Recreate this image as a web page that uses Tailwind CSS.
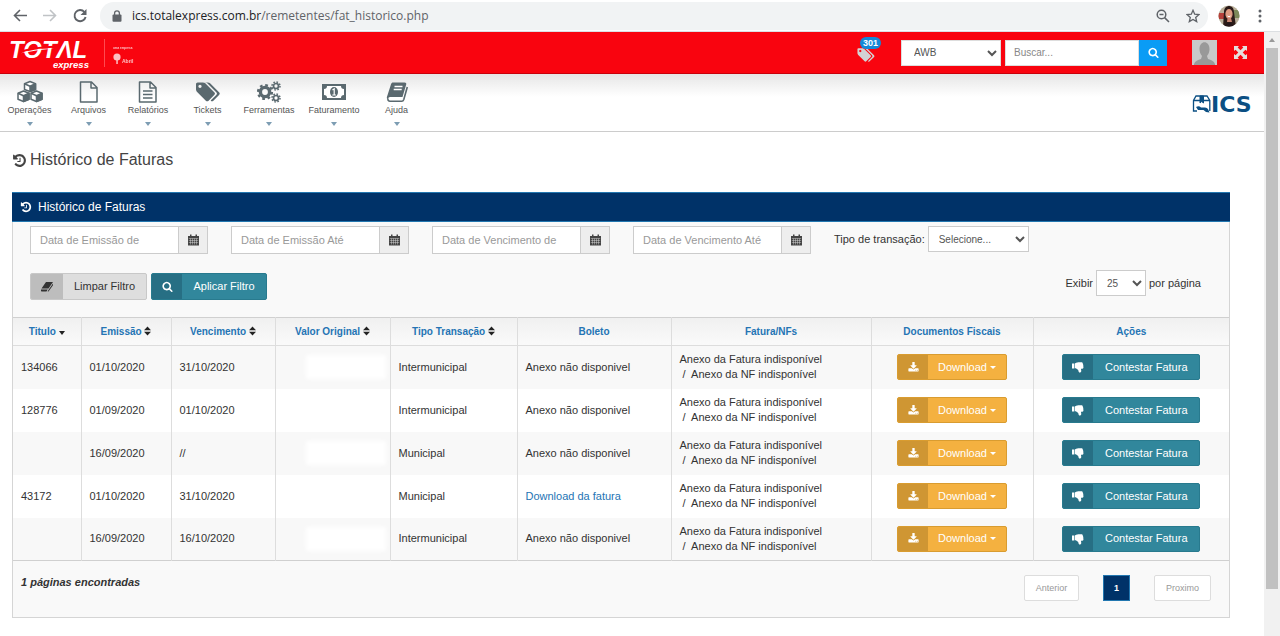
<!DOCTYPE html>
<html lang="pt-BR">
<head>
<meta charset="utf-8">
<meta name="viewport" content="width=device-width, initial-scale=1">
<title>Histórico de Faturas</title>
<script src="https://cdn.jsdelivr.net/npm/@tailwindcss/browser@4"></script>
</head>
<body class="flex min-h-screen flex-col bg-white font-['Liberation_Sans',Arial,sans-serif] text-[11px] leading-[15px] text-[#333]">

<svg class="hidden" aria-hidden="true">
  <symbol id="i-search" viewBox="0 0 1792 1792"><path d="M1216 832q0-185-131.500-316.500t-316.500-131.500-316.500 131.500-131.500 316.500 131.500 316.500 316.500 131.500 316.500-131.500 131.500-316.500zm512 832q0 52-38 90t-90 38q-54 0-90-38l-343-342q-179 124-399 124-143 0-273.500-55.500t-225-150-150-225-55.500-273.500 55.500-273.500 150-225 225-150 273.500-55.500 273.500 55.500 225 150 150 225 55.500 273.500q0 220-124 399l343 343q37 37 37 90z"/></symbol>
  <symbol id="i-history" viewBox="0 0 1792 1792"><path d="M1664 896q0 156-61 298t-164 245-245 164-298 61q-172 0-327-72.500t-264-204.500q-7-10-6.500-22.500t8.500-20.500l137-138q10-9 25-9 16 2 23 12 73 95 179 147t225 52q104 0 198.500-40.500t163.500-109.500 109.500-163.500 40.500-198.500-40.500-198.500-109.500-163.500-163.500-109.500-198.500-40.500q-98 0-188 35.500t-160 101.500l137 138q31 30 14 69-17 40-59 40h-448q-26 0-45-19t-19-45v-448q0-42 40-59 39-17 69 14l130 129q107-101 244.500-156.500t284.500-55.500q156 0 298 61t245 164 164 245 61 298zm-640-288v448q0 14-9 23t-23 9h-320q-14 0-23-9t-9-23v-64q0-14 9-23t23-9h224v-352q0-14 9-23t23-9h64q14 0 23 9t9 23z"/></symbol>
  <symbol id="i-download" viewBox="0 0 1792 1792"><path d="M1344 1344q0-26-19-45t-45-19-45 19-19 45 19 45 45 19 45-19 19-45zm256 0q0-26-19-45t-45-19-45 19-19 45 19 45 45 19 45-19 19-45zm128-224v320q0 40-28 68t-68 28h-1472q-40 0-68-28t-28-68v-320q0-40 28-68t68-28h465l135 136q58 56 136 56t136-56l136-136h464q40 0 68 28t28 68zm-325-569q17 41-14 70l-448 448q-18 19-45 19t-45-19l-448-448q-31-29-14-70 17-39 59-39h256v-448q0-26 19-45t45-19h256q26 0 45 19t19 45v448h256q42 0 59 39z"/></symbol>
  <symbol id="i-tags" viewBox="0 0 1920 1792"><path d="M448 448q0-53-37.500-90.500t-90.500-37.500-90.500 37.500-37.500 90.500 37.500 90.500 90.500 37.500 90.500-37.500 37.500-90.500zm1067 576q0 53-37 90l-491 492q-39 37-91 37-53 0-90-37l-715-716q-38-37-64.500-101t-26.500-117v-416q0-52 38-90t90-38h416q53 0 117 26.500t102 64.500l715 714q37 39 37 91zm384 0q0 53-37 90l-491 492q-39 37-91 37-36 0-59-14t-53-45l470-470q37-37 37-90 0-52-37-91l-715-714q-38-38-102-64.500t-117-26.500h224q53 0 117 26.500t102 64.500l715 714q37 39 37 91z"/></symbol>
  <symbol id="i-thumb" viewBox="0 0 12 12"><path d="M0 2.600h2.300v5H0zM2.900 2.400C4.600 1.500 6 1.300 7.500 1.300h1.900c1 0 1.400.6 1.300 1.300.5.400.6 1 .4 1.500.4.500.4 1 .2 1.500.4 1 .1 2.100-1 2.100H8.900c.3.900.5 1.900.3 2.700-.3 1.200-2 1.500-2.400.6-.3-.8-.3-1.700-.9-2.300-.8-.9-1.800-1.500-3-1.500z"/></symbol>
  <symbol id="i-calendar" viewBox="0 0 11 12"><path d="M0 2h2V.5h1.500V2h4V.5H9V2h2v9.500H0z"/><path d="M.8 4.500h9.400M.8 6.500h9.400M.8 8.500h9.400M2.500 4.500v6M4.500 4.500v6M6.500 4.500v6M8.500 4.500v6" stroke="#eee" stroke-width=".4" fill="none"/></symbol>
  <symbol id="i-sort" viewBox="0 0 7 10"><path d="M0 4.200 3.500.5 7 4.200zM0 5.800h7L3.500 9.500z"/></symbol>
</svg>

<!-- Browser bar -->
<header class="flex h-8 shrink-0 items-center border-b border-[#dcdfe2] bg-white text-[#5f6368]">
  <nav class="flex items-center gap-3.5 px-3" aria-label="Navegador">
    <button type="button" aria-label="Voltar"><svg class="size-4" viewBox="0 0 16 16" fill="none" stroke="currentColor" stroke-width="1.600"><path d="M15 7.500H2.500M8 2l-5.500 5.500L8 13"/></svg></button>
    <button type="button" aria-label="Avançar" class="text-[#c0c3c6]"><svg class="size-4" viewBox="0 0 16 16" fill="none" stroke="currentColor" stroke-width="1.600"><path d="M1 7.500h12.500M8 2l5.500 5.500L8 13"/></svg></button>
    <button type="button" aria-label="Recarregar"><svg class="size-4" viewBox="0 0 16 16"><path d="M12.400 4A5.600 5.600 0 1 0 13.600 9" fill="none" stroke="currentColor" stroke-width="1.900"/><path d="M14.500 1v6h-6z" fill="currentColor"/></svg></button>
  </nav>
  <div class="flex h-7 flex-1 items-center rounded-full bg-[#f1f3f4] pr-2 pl-3">
    <svg class="h-3 w-2.5 shrink-0" viewBox="0 0 10 12" aria-hidden="true"><rect x=".5" y="4.500" width="9" height="7.200" rx="1" fill="currentColor"/><path d="M2.600 5V3.200a2.400 2.400 0 0 1 4.800 0V5" fill="none" stroke="currentColor" stroke-width="1.300"/></svg>
    <p class="ml-2.5 flex-1 font-['Open_Sans',sans-serif] text-[12px] leading-5"><span class="text-[#202124]">ics.totalexpress.com.br</span>/remetentes/fat_historico.php</p>
    <button type="button" aria-label="Zoom" class="mr-4"><svg class="size-3.5" viewBox="0 0 14 14" fill="none" stroke="currentColor" stroke-width="1.500"><circle cx="5.500" cy="5.500" r="4.300"/><path d="M8.600 8.600 13 13M3.500 5.500h4"/></svg></button>
    <button type="button" aria-label="Favoritos"><svg class="size-3.5" viewBox="0 0 14 14" fill="none" stroke="currentColor" stroke-width="1.300"><path d="m7 1.300 1.700 3.900 4.200.4-3.200 2.800 1 4.200L7 10.400l-3.700 2.200 1-4.200L1.100 5.600l4.200-.4z"/></svg></button>
  </div>
  <button type="button" aria-label="Perfil" class="ml-2.5"><svg class="size-[22px]" viewBox="0 0 22 22"><clipPath id="pf"><circle cx="11" cy="11" r="10.500"/></clipPath><g clip-path="url(#pf)"><path fill="#b9b09a" d="M0 0h22v22H0z"/><path fill="#b5413a" d="M0 8h6v6H0z"/><path fill="#7c8a5a" d="M16 5h6v8h-6z"/><path fill="#2c1b18" d="M6 7c0-8 10-8 10 0l2 15H5z"/><ellipse cx="11" cy="9" rx="3.600" ry="5" fill="#dd9c82"/><path fill="#c98470" d="M9.500 13h3.500l1 4h-5z"/><path fill="#241619" d="M6 22q5-9 10 0z"/><path d="M9.500 11q1.500 1.400 3 0" stroke="#fff" fill="none"/></g></svg></button>
  <button type="button" aria-label="Menu" class="mr-[18px] ml-[18px]"><svg class="h-3.5 w-1" viewBox="0 0 4 14" fill="currentColor"><circle cx="2" cy="2" r="1.500"/><circle cx="2" cy="7" r="1.500"/><circle cx="2" cy="12" r="1.500"/></svg></button>
</header>

<div class="flex flex-1">
<div class="min-w-0 flex-1">

  <!-- Top bar -->
  <header class="flex h-[42px] items-center border-b border-[#c9000b] bg-[#f9040f]">
    <a href="#" class="ml-2.5"><svg class="h-[34px] w-[130px]" viewBox="0 0 130 34" role="img" aria-label="Total Express, uma empresa Abril" fill="#fff" font-family="Liberation Sans" font-weight="bold">
      <text x="-1" y="22" font-size="24" font-style="italic">TOTΛL</text>
      <path d="M12 15.200q14-4 32-4.500" stroke="#f9040f" stroke-width="2" fill="none"/>
      <path d="M11 17.300q12-5 33-4.800-16 1-33 4.800z"/>
      <text x="43" y="32" font-size="9.500" font-style="italic">express</text>
      <path d="M94.500 3v28" stroke="#ff4a50" stroke-width="1"/>
      <g opacity=".75"><text x="103" y="13" font-size="3">uma empresa</text><circle cx="107" cy="21" r="3.600"/><path d="M106.300 22h1.500v6h-1.500z"/><text x="112" y="27" font-size="5">Abril</text></g>
    </svg></a>
    <div class="ml-auto flex items-center">
      <a href="#" class="relative mr-[26px] block" aria-label="301 tickets">
        <svg class="mt-1 h-4 w-[18px] fill-[#d3d3d3]" aria-hidden="true"><use href="#i-tags"/></svg>
        <span class="absolute -top-1.5 left-[3px] rounded-full bg-[#1488d8] px-[3px] text-[9px] leading-3 font-bold text-white">301</span>
      </a>
      <select aria-label="Tipo de busca" class="h-[26px] w-[100px] border border-[#ddd] bg-white pl-2 text-[10px] text-[#555]"><option>AWB</option></select>
      <form class="ml-1 flex" onsubmit="return false">
        <input type="search" aria-label="Buscar" placeholder="Buscar..." class="h-[26px] w-[134px] border border-[#ddd] bg-white px-2 text-[10px] placeholder:text-[#888]">
        <button type="submit" aria-label="Buscar" class="flex h-[26px] w-7 items-center justify-center bg-[#0a9cf5] fill-white"><svg class="size-[11px]"><use href="#i-search"/></svg></button>
      </form>
      <a href="#" aria-label="Usuário" class="ml-[25px]"><svg class="size-[25px]" viewBox="0 0 25 25"><path fill="#c9c9c9" d="M0 0h25v25H0z"/><path fill="#999" d="M7.500 9c0-9 10-9 10 0 0 3-1 5-2.500 7l1 3c3 .8 6 2 7 5v1H2v-1c1-3 4-4.200 7-5l1-3c-1.500-2-2.500-4-2.500-7z"/></svg></a>
      <button type="button" aria-label="Tela cheia" class="mx-[17px]"><svg class="size-[13px]" viewBox="0 0 13 13" fill="#e6dede"><path d="M0 0h5L3.700 1.500 6.500 4.300 9.300 1.500 8 0h5v5l-1.500-1.300-2.800 2.800 2.800 2.800L13 8v5H8l1.300-1.500-2.800-2.800-2.800 2.800L5 13H0V8l1.500 1.300 2.800-2.800-2.800-2.800L0 5z"/></svg></button>
    </div>
  </header>

  <!-- Main menu -->
  <div class="flex h-[58px] items-center justify-between border-b border-[#ccc] bg-linear-to-b from-[#e6e6e6] to-white to-40%">
    <nav class="flex self-start pt-1.5 text-[9px] leading-3 text-[#555]" aria-label="Principal">
      <a href="#" class="flex w-[59px] flex-col items-center"><svg class="h-6 w-7" viewBox="0 0 28 24" stroke="#5a696f" stroke-linejoin="round" stroke-width="1.500"><g fill="#fff"><path d="m14 1.500 5.500 2.200v5.800L14 11.500 8.500 9.500V3.700z"/><path d="m7.500 11 5.500 2.200v6L7.500 21.500 2 19.200v-6z"/><path d="m20.500 11 5.500 2.200v6l-5.500 2.300-5.500-2.300v-6z"/></g><path fill="#5a696f" d="m14 6.200 5.500-2.500v5.800L14 11.500zM7.500 15.800l5.500-2.600v6l-5.500 2.300zM20.500 15.800l5.500-2.600v6l-5.500 2.300z"/><path fill="none" d="M8.500 3.700 14 6.200M2 13.200l5.500 2.600M15 13.200l5.500 2.600"/></svg><span>Operações</span><i class="mt-1.5 border-x-[3px] border-t-4 border-x-transparent border-t-[#7d9db3]"></i></a>
      <a href="#" class="flex w-[59px] flex-col items-center"><svg class="h-6 w-5" viewBox="0 0 20 24" fill="none" stroke="#5a696f" stroke-width="1.500" stroke-linejoin="round"><path d="M1.500 2h11l5.500 5.500V22H1.500zM12 2v6h6"/></svg><span>Arquivos</span><i class="mt-1.5 border-x-[3px] border-t-4 border-x-transparent border-t-[#7d9db3]"></i></a>
      <a href="#" class="flex w-[60px] flex-col items-center"><svg class="h-6 w-5" viewBox="0 0 20 24" fill="none" stroke="#5a696f" stroke-width="1.500" stroke-linejoin="round"><path d="M1.500 2h11l5.500 5.500V22H1.500zM12 2v6h6M5 11h9.500M5 14.500h9.500M5 18h9.500"/></svg><span>Relatórios</span><i class="mt-1.5 border-x-[3px] border-t-4 border-x-transparent border-t-[#7d9db3]"></i></a>
      <a href="#" class="flex w-[59px] flex-col items-center"><svg class="h-6 w-6 fill-[#5a696f]"><use href="#i-tags"/></svg><span>Tickets</span><i class="mt-1.5 border-x-[3px] border-t-4 border-x-transparent border-t-[#7d9db3]"></i></a>
      <a href="#" class="flex w-16 flex-col items-center"><svg class="h-6 w-6" viewBox="0 0 24 24" fill="none" stroke="#5a696f"><circle cx="8" cy="12" r="4.600" stroke-width="3.400"/><circle cx="8" cy="12" r="7" stroke-width="2.200" stroke-dasharray="2.750"/><circle cx="19" cy="6" r="2.500" stroke-width="1.700"/><circle cx="19" cy="6" r="4" stroke-width="1.500" stroke-dasharray="1.570"/><circle cx="19" cy="18" r="2.500" stroke-width="1.700"/><circle cx="19" cy="18" r="4" stroke-width="1.500" stroke-dasharray="1.570"/></svg><span>Ferramentas</span><i class="mt-1.5 border-x-[3px] border-t-4 border-x-transparent border-t-[#7d9db3]"></i></a>
      <a href="#" class="flex w-[66px] flex-col items-center"><svg class="h-6 w-6" viewBox="0 0 24 24"><path fill="#5a696f" d="M0 4h24v16H0z"/><path fill="#fff" d="M5 6h14a3 3 0 0 0 3 3v6a3 3 0 0 0-3 3H5a3 3 0 0 0-3-3V9a3 3 0 0 0 3-3z"/><ellipse cx="12" cy="12" rx="4" ry="5" fill="#5a696f"/><path d="m10.500 10 1.700-1.200V15M10.300 15h3.600" fill="none" stroke="#fff" stroke-width="1.200"/></svg><span>Faturamento</span><i class="mt-1.5 border-x-[3px] border-t-4 border-x-transparent border-t-[#7d9db3]"></i></a>
      <a href="#" class="flex w-[59px] flex-col items-center"><svg class="h-6 w-[22px]" viewBox="0 0 22 24"><path d="M7 2.500h11.500c1.500 0 2 .8 1.700 2L16.500 17H4.200C2.500 17 2 18 2.300 19.200L1 18.500c-.4-1 0-2 .4-3L5 4.300C5.400 3 6 2.500 7 2.500z" fill="#5a696f"/><path d="M8.500 6.500h8M7.700 9.500h8" stroke="#fff" stroke-width="1.300"/><path d="M2 18.500c-.3 1.500.5 2.700 2 2.700h11.800c1 0 1.600-.6 2-1.700L21.300 7" fill="none" stroke="#5a696f" stroke-width="1.600"/></svg><span>Ajuda</span><i class="mt-1.5 border-x-[3px] border-t-4 border-x-transparent border-t-[#7d9db3]"></i></a>
    </nav>
    <a href="#" class="mr-2.5"><svg class="h-[22px] w-[62px]" viewBox="0 0 62 22" role="img" aria-label="ICS" fill="none" stroke="#0b4f83"><path d="M5 19H1.500V8.500L4 4h11l2.800 4.500V19M1.500 8.500H8M11.500 8.500h6" stroke-width="1.300"/><path d="M8 4h3.500v7L9.700 9.500 8 11z" fill="#0b4f83"/><path d="M4 15q3-1.500 5 .5h4q2 0 3 1.500l1.500 3.500q-4 0-6-2.500H6z" fill="#0b4f83" stroke="none"/><text x="19" y="20" font-family="DejaVu Sans" font-weight="bold" font-size="22" fill="#0b4f83" stroke="none">ICS</text></svg></a>
  </div>

  <main class="pr-[34px] pl-3">
    <h1 class="mt-4 flex items-center gap-[3px] text-[16px] leading-6 text-[#444]"><svg class="size-[15px] fill-[#444]" aria-hidden="true"><use href="#i-history"/></svg>Histórico de Faturas</h1>

    <section class="mt-5 border border-t-0 border-[#d5d5d5] bg-[#f9f9f9]">
      <h2 class="-mx-px flex h-[30px] items-center gap-1.5 border-y border-[#2277b0] bg-[#003268] px-2 text-[12px] text-white"><svg class="size-3 fill-white" aria-hidden="true"><use href="#i-history"/></svg>Histórico de Faturas</h2>

      <form class="pr-7 pl-[17px]" onsubmit="return false">
        <div class="mt-1 flex items-start gap-[23px]">
          <div class="flex"><input type="text" aria-label="Data de Emissão de" placeholder="Data de Emissão de" class="h-7 w-[149px] border border-[#ccc] bg-white px-[9px] placeholder:text-[#999]"><button type="button" aria-label="Abrir calendário" class="flex h-7 w-[29px] items-center justify-center border border-l-0 border-[#ccc] bg-[#eee] fill-[#444]"><svg class="h-3 w-[11px]"><use href="#i-calendar"/></svg></button></div>
          <div class="flex"><input type="text" aria-label="Data de Emissão Até" placeholder="Data de Emissão Até" class="h-7 w-[149px] border border-[#ccc] bg-white px-[9px] placeholder:text-[#999]"><button type="button" aria-label="Abrir calendário" class="flex h-7 w-[29px] items-center justify-center border border-l-0 border-[#ccc] bg-[#eee] fill-[#444]"><svg class="h-3 w-[11px]"><use href="#i-calendar"/></svg></button></div>
          <div class="flex"><input type="text" aria-label="Data de Vencimento de" placeholder="Data de Vencimento de" class="h-7 w-[149px] border border-[#ccc] bg-white px-[9px] placeholder:text-[#999]"><button type="button" aria-label="Abrir calendário" class="flex h-7 w-[29px] items-center justify-center border border-l-0 border-[#ccc] bg-[#eee] fill-[#444]"><svg class="h-3 w-[11px]"><use href="#i-calendar"/></svg></button></div>
          <div class="flex"><input type="text" aria-label="Data de Vencimento Até" placeholder="Data de Vencimento Até" class="h-7 w-[149px] border border-[#ccc] bg-white px-[9px] placeholder:text-[#999]"><button type="button" aria-label="Abrir calendário" class="flex h-7 w-[29px] items-center justify-center border border-l-0 border-[#ccc] bg-[#eee] fill-[#444]"><svg class="h-3 w-[11px]"><use href="#i-calendar"/></svg></button></div>
          <div class="flex items-center gap-[3px]"><label for="tipo">Tipo de transação:</label><select id="tipo" class="h-[26px] w-[101px] border border-[#ccc] bg-white pl-1.5 text-[10px] text-[#555]"><option>Selecione...</option></select></div>
        </div>
        <div class="mt-4 flex items-start justify-between pb-[17px]">
          <div class="mt-[3px] flex gap-1">
            <button type="reset" class="flex h-[27px] w-[117px] overflow-hidden rounded-xs border border-[#c8c8c8] bg-[#dedede]"><span class="flex h-full w-8 items-center justify-center bg-[#bdbdbd]"><svg class="h-2.5 w-3" viewBox="0 0 12 10" fill="#333"><path d="M5 0h7L7.500 6.500h-7zM0 7.500h6.700L5.500 9.500H.6Q-.4 9 0 7.500zM7.800 7.500l4.200-6v1.800L7.500 9.500H6.600z"/></svg></span><span class="flex h-full flex-1 items-center justify-center">Limpar Filtro</span></button>
            <button type="submit" class="flex h-[27px] w-[116px] overflow-hidden rounded-xs border border-[#287a8e] bg-[#31879c] text-white"><span class="flex h-full w-[30px] items-center justify-center bg-[#276f84] fill-white"><svg class="size-[11px]"><use href="#i-search"/></svg></span><span class="flex h-full flex-1 items-center justify-center">Aplicar Filtro</span></button>
          </div>
          <div class="flex items-center gap-[3px]"><label for="exibir">Exibir</label><select id="exibir" class="h-[26px] w-[50px] border border-[#ccc] bg-white pl-1.5 text-[10px] text-[#555]"><option>25</option></select><span>por página</span></div>
        </div>
      </form>

      <table class="w-full table-fixed border-collapse border-y border-[#d0d0d0]">
        <colgroup><col class="w-[68px]"><col class="w-[90px]"><col class="w-[104px]"><col class="w-[115px]"><col class="w-[127px]"><col class="w-[154px]"><col class="w-[200px]"><col class="w-[162px]"><col class="w-[196px]"></colgroup>
        <thead>
          <tr class="h-7 divide-x divide-[#ddd] border-b border-[#ddd] bg-linear-to-b from-[#f0f0f0] to-[#fafafa] text-[10px] text-[#2474b4]">
            <th scope="col"><a href="#">Titulo</a><i class="ml-[3px] inline-block border-x-[3px] border-t-4 border-x-transparent border-t-[#222]"></i></th>
            <th scope="col"><a href="#">Emissão</a> <svg class="inline h-2.5 w-[7px] fill-[#222] align-[-1px]"><use href="#i-sort"/></svg></th>
            <th scope="col"><a href="#">Vencimento</a> <svg class="inline h-2.5 w-[7px] fill-[#222] align-[-1px]"><use href="#i-sort"/></svg></th>
            <th scope="col"><a href="#">Valor Original</a> <svg class="inline h-2.5 w-[7px] fill-[#222] align-[-1px]"><use href="#i-sort"/></svg></th>
            <th scope="col"><a href="#">Tipo Transação</a> <svg class="inline h-2.5 w-[7px] fill-[#222] align-[-1px]"><use href="#i-sort"/></svg></th>
            <th scope="col">Boleto</th>
            <th scope="col">Fatura/NFs</th>
            <th scope="col">Documentos Fiscais</th>
            <th scope="col">Ações</th>
          </tr>
        </thead>
        <tbody id="rows"></tbody>
      </table>

      <footer class="flex items-start justify-between pt-3.5 pr-[18px] pb-4 pl-2">
        <p class="font-bold italic">1 páginas encontradas</p>
        <nav class="flex gap-6 text-[9px]" aria-label="Paginação">
          <button type="button" class="h-[26px] w-[55px] rounded-xs border border-[#ddd] bg-white text-[#999]">Anterior</button>
          <button type="button" aria-current="page" class="h-[26px] w-[27px] border border-[#2277b0] bg-[#003268] font-bold text-white">1</button>
          <button type="button" class="h-[26px] w-[57px] rounded-xs border border-[#ddd] bg-white text-[#999]">Proximo</button>
        </nav>
      </footer>
    </section>
  </main>
</div>

<!-- Scroll track -->
<aside class="flex w-4 shrink-0 flex-col items-center bg-[#f1f1f1]" aria-hidden="true">
  <i class="mt-1.5 mb-1.5 border-x-[3px] border-b-4 border-x-transparent border-b-[#999]"></i>
  <div class="w-3 flex-1 bg-[#c1c1c1]"></div>
  <div class="h-[47px]"></div>
</aside>
</div>

<template id="row">
  <tr class="h-[43px] divide-x divide-[#ddd] odd:bg-[#f8f8f8] even:bg-white">
    <td class="px-2"></td><td class="px-2"></td><td class="px-2"></td>
    <td class="pl-[30px]"><div class="h-6 w-20 bg-white blur-[2px]"></div></td>
    <td class="px-2"></td><td class="px-2"></td>
    <td class="px-2">Anexo da Fatura indisponível<br>&nbsp;/&nbsp; Anexo da NF indisponível</td>
    <td><button type="button" class="mx-auto flex h-[26px] w-[110px] overflow-hidden rounded-xs border border-[#d99c30] bg-[#f4b140] text-white"><span class="flex h-full w-[30px] items-center justify-center bg-[#cf9633] fill-white"><svg class="size-[11px]"><use href="#i-download"/></svg></span><span class="flex h-full flex-1 items-center justify-center gap-[3px]">Download<i class="border-x-[3px] border-t-[3px] border-x-transparent border-t-white"></i></span></button></td>
    <td><button type="button" class="mx-auto flex h-[26px] w-[138px] overflow-hidden rounded-xs border border-[#287a8e] bg-[#31879c] text-white"><span class="flex h-full w-[30px] items-center justify-center bg-[#276f84] fill-white"><svg class="size-3"><use href="#i-thumb"/></svg></span><span class="flex h-full flex-1 items-center justify-center">Contestar Fatura</span></button></td>
  </tr>
</template>
<script>
  const data = [
    ["134066", "01/10/2020", "31/10/2020", "Intermunicipal", false],
    ["128776", "01/09/2020", "01/10/2020", "Intermunicipal", false],
    ["", "16/09/2020", "//", "Municipal", false],
    ["43172", "01/10/2020", "31/10/2020", "Municipal", true],
    ["", "16/09/2020", "16/10/2020", "Intermunicipal", false]
  ];
  const tpl = document.getElementById("row");
  for (const [titulo, emissao, venc, tipo, boleto] of data) {
    const tr = tpl.content.cloneNode(true), td = tr.querySelectorAll("td");
    td[0].textContent = titulo;
    td[1].textContent = emissao;
    td[2].textContent = venc;
    td[4].textContent = tipo;
    td[5].innerHTML = boleto ? '<a href="#" class="text-[#2474b4]">Download da fatura</a>' : "Anexo não disponivel";
    document.getElementById("rows").append(tr);
  }
</script>
</body>
</html>
